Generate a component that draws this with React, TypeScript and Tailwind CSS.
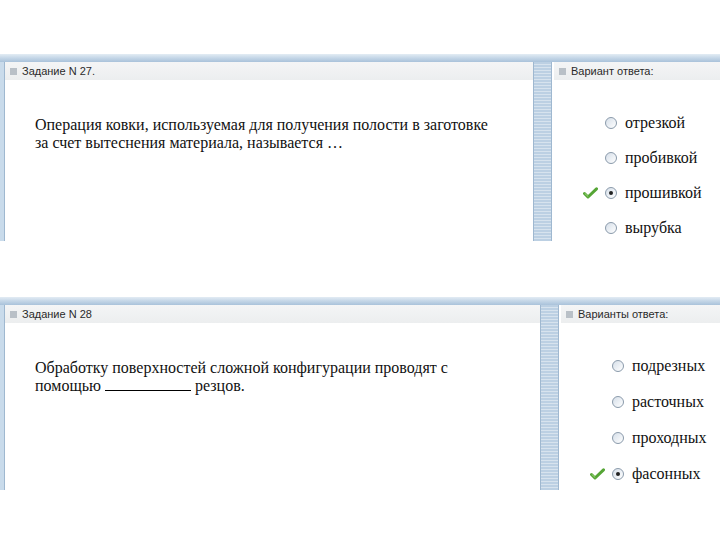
const serif = "font-['Liberation_Serif',_'Times_New_Roman',_serif]"

function Radio({ checked }: { checked?: boolean }) {
  return (
    <span className="flex h-[12px] w-[12px] shrink-0 items-center justify-center rounded-full border border-[#8a9aab] bg-gradient-to-br from-[#d6dfe9] to-white">
      {checked && <span className="h-[4px] w-[4px] rounded-full bg-[#222]" />}
    </span>
  )
}

function Check() {
  return (
    <svg width="15" height="12" viewBox="0 0 15 12" aria-hidden={true}>
      <path d="M1.5 6.5 L5 10 L13.5 1.8" fill="none" stroke="#55a535" strokeWidth="3" strokeLinecap="round" strokeLinejoin="round" />
      <path d="M2 6.6 L5 9.4" fill="none" stroke="#9fd97a" strokeWidth="1" strokeLinecap="round" />
    </svg>
  )
}

function Header({ children }: { children: React.ReactNode }) {
  return (
    <div className="flex h-[18px] items-center gap-[5px] bg-gradient-to-b from-[#f4f5f6] to-[#eceeef] pl-[5px] font-['Liberation_Sans',_Arial,_sans-serif] text-[11px] text-[#2a2a2a]">
      <span className="h-[7px] w-[7px] bg-[#b9c0c7]" />
      {children}
    </div>
  )
}

function Divider() {
  return (
    <div className="w-[19px] shrink-0 border-x border-[#9fb8d0] bg-[repeating-linear-gradient(to_bottom,#bcd0e3_0px,#bcd0e3_2px,#d7e3ee_2px,#d7e3ee_3px)]" />
  )
}

interface Option {
  label: string
  correct?: boolean
}

function Panel({
  title,
  answerTitle,
  question,
  options,
  mainWidth,
  height,
  gap,
}: {
  title: string
  answerTitle: string
  question: React.ReactNode
  options: Option[]
  mainWidth: string
  height: string
  gap: string
}) {
  return (
    <div className={`flex flex-col ${height}`}>
      <div className="h-[8px] bg-gradient-to-b from-[#e3ecf4] via-[#c4d6e7] to-[#a9c2da]" />
      <div className="flex flex-1">
        <div className="w-[5px] shrink-0 border-r border-[#9fb8d0] bg-[#c9dbeb]" />
        <div className={`flex ${mainWidth} shrink-0 flex-col bg-white`}>
          <Header>{title}</Header>
          <div className={`${serif} px-[30px] pt-[36px] text-[16px] leading-[18px] text-[#111]`}>
            {question}
          </div>
        </div>
        <Divider />
        <div className="flex flex-1 flex-col bg-white pl-[2px]">
          <Header>{answerTitle}</Header>
          <div className={`flex flex-col ${gap} pl-[29px] pt-[34px]`}>
            {options.map((o) => (
              <div key={o.label} className={`flex items-center ${serif} text-[16px] leading-[18px] text-[#111]`}>
                <span className="flex w-[22px] shrink-0 justify-start">{o.correct && <Check />}</span>
                <Radio checked={o.correct} />
                <span className="ml-[8px]">{o.label}</span>
              </div>
            ))}
          </div>
        </div>
      </div>
    </div>
  )
}

export default function App() {
  return (
    <div className="flex h-[540px] w-[720px] flex-col gap-[56px] overflow-hidden bg-white pt-[54px]">
      <Panel
        title="Задание N 27."
        answerTitle="Вариант ответа:"
        question={
          <>
            Операция ковки, используемая для получения полости в заготовке
            <br />
            за счет вытеснения материала, называется …
          </>
        }
        options={[
          { label: 'отрезкой' },
          { label: 'пробивкой' },
          { label: 'прошивкой', correct: true },
          { label: 'вырубка' },
        ]}
        mainWidth="w-[528px]"
        height="h-[187px]"
        gap="gap-[17px]"
      />
      <Panel
        title="Задание N 28"
        answerTitle="Варианты ответа:"
        question={
          <>
            Обработку поверхностей сложной конфигурации проводят с
            <br />
            помощью <span className="inline-block w-[86px] border-b border-black align-baseline" /> резцов.
          </>
        }
        options={[
          { label: 'подрезных' },
          { label: 'расточных' },
          { label: 'проходных' },
          { label: 'фасонных', correct: true },
        ]}
        mainWidth="w-[535px]"
        height="h-[193px]"
        gap="gap-[18px]"
      />
    </div>
  )
}
